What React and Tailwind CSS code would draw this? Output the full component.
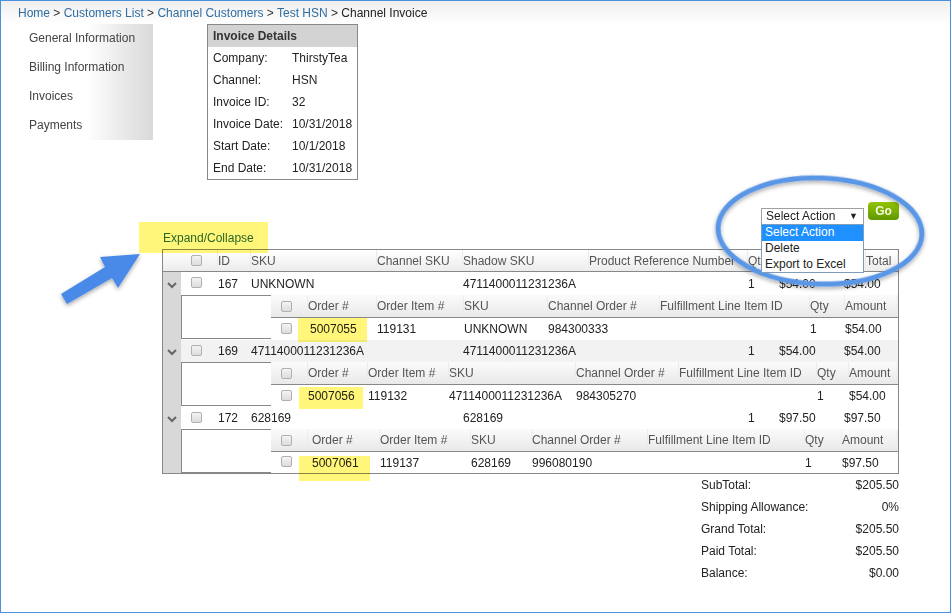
const Check = () => (
  <span className="block w-[11px] h-[11px] rounded-[2px] border border-[#b0b0b0] bg-gradient-to-b from-[#f4f4f4] to-[#dcdcdc]" />
);

const Chevron = () => (
  <svg width="10" height="7" viewBox="0 0 10 7" className="mt-[3px]">
    <polyline points="1,1 5,5 9,1" fill="none" stroke="#666" strokeWidth="2" />
  </svg>
);

const Cell = ({ w, head, children }) => (
  <div
    className={`${w} h-full flex items-center whitespace-nowrap shrink-0 ${
      head ? "text-[#555] border-r border-[#ececec]" : "text-[#222]"
    }`}
  >
    {children}
  </div>
);

const mainHead = [
  ["w-[33px]", "ID"],
  ["w-[126px]", "SKU"],
  ["w-[86px]", "Channel SKU"],
  ["w-[126px]", "Shadow SKU"],
  ["w-[159px]", "Product Reference Number"],
  ["w-[32px]", "Qty"],
  ["w-[86px]", ""],
  ["w-[32px]", "Total"],
];

const mainWidths = ["w-[33px]", "w-[126px]", "w-[86px]", "w-[126px]", "w-[159px]", "w-[31px]", "w-[65px]", "w-[54px]"];

const cols = ["Order #", "Order Item #", "SKU", "Channel Order #", "Fulfillment Line Item ID", "Qty", "Amount"];

const groups = [
  {
    gray: false,
    rowH: "h-[23px]",
    detailH: "h-[45px]",
    row: ["167", "UNKNOWN", "", "4711400011231236A", "", "1", "$54.00", "$54.00"],
    colWidths: ["w-[69px]", "w-[87px]", "w-[84px]", "w-[112px]", "w-[150px]", "w-[35px]", "w-[53px]"],
    headPad: "",
    dataPad: "pl-[2px]",
    data: ["5007055", "119131", "UNKNOWN", "984300333", "", "1", "$54.00"],
  },
  {
    gray: true,
    rowH: "h-[22px]",
    detailH: "h-[45px]",
    row: ["169", "4711400011231236A", "", "4711400011231236A", "", "1", "$54.00", "$54.00"],
    colWidths: ["w-[60px]", "w-[81px]", "w-[127px]", "w-[103px]", "w-[138px]", "w-[32px]", "w-[49px]"],
    headPad: "",
    dataPad: "",
    data: ["5007056", "119132", "4711400011231236A", "984305270", "", "1", "$54.00"],
  },
  {
    gray: false,
    rowH: "h-[22px]",
    detailH: "h-[44px]",
    row: ["172", "628169", "", "628169", "", "1", "$97.50", "$97.50"],
    colWidths: ["w-[72px]", "w-[91px]", "w-[61px]", "w-[116px]", "w-[157px]", "w-[37px]", "w-[56px]"],
    headPad: "pl-[4px]",
    dataPad: "pl-[4px]",
    data: ["5007061", "119137", "628169", "996080190", "", "1", "$97.50"],
  },
];

const Group = ({ g }) => (
  <div>
    <div className={`${g.rowH} flex ${g.gray ? "bg-[#f2f2f2]" : "bg-white"}`}>
      <div className="w-[18px] shrink-0 bg-[#d8d8d8] flex items-center justify-center">
        <Chevron />
      </div>
      <div className="w-[37px] shrink-0 flex items-center pl-[10px] pb-[2px]">
        <Check />
      </div>
      {g.row.map((t, i) => (
        <Cell key={i} w={mainWidths[i]}>{t}</Cell>
      ))}
    </div>
    <div className={`${g.detailH} flex`}>
      <div className="w-[18px] shrink-0 bg-[#d8d8d8]" />
      <div className="w-[90px] h-[44px] shrink-0 bg-white border-l border-t border-b border-[#888]" />
      <div className="flex-1 flex flex-col bg-white">
        <div className="h-[23px] shrink-0 flex border-b border-[#888] bg-gradient-to-b from-[#fbfbfb] to-[#e9e9e9]">
          <div className="w-[37px] shrink-0 flex items-center pl-[10px] border-r border-[#ececec]">
            <Check />
          </div>
          {cols.map((t, i) => (
            <Cell key={i} w={g.colWidths[i]} head>
              <span className={i === 0 ? g.headPad : ""}>{t}</span>
            </Cell>
          ))}
        </div>
        <div className="flex-1 flex">
          <div className="w-[37px] shrink-0 flex items-center pl-[10px] pb-[2px]">
            <Check />
          </div>
          {g.data.map((t, i) => (
            <Cell key={i} w={g.colWidths[i]}>
              <span className={i === 0 ? g.dataPad : ""}>{t}</span>
            </Cell>
          ))}
        </div>
      </div>
    </div>
  </div>
);

const details = [
  ["Company:", "ThirstyTea"],
  ["Channel:", "HSN"],
  ["Invoice ID:", "32"],
  ["Invoice Date:", "10/31/2018"],
  ["Start Date:", "10/1/2018"],
  ["End Date:", "10/31/2018"],
];

const totals = [
  ["SubTotal:", "$205.50"],
  ["Shipping Allowance:", "0%"],
  ["Grand Total:", "$205.50"],
  ["Paid Total:", "$205.50"],
  ["Balance:", "$0.00"],
];

export default function App() {
  return (
    <div className="relative w-[951px] h-[613px] overflow-hidden bg-white text-[12px] text-[#222] font-['Liberation_Sans',Arial,sans-serif]">
      <div className="h-[24px] pl-[18px] pt-[5px] leading-[16px] bg-gradient-to-b from-[#eeeeee] to-white text-[#333]">
        <span className="text-[#2f6da3]">Home</span> &gt; <span className="text-[#2f6da3]">Customers List</span> &gt;{" "}
        <span className="text-[#2f6da3]">Channel Customers</span> &gt; <span className="text-[#2f6da3]">Test HSN</span> &gt;{" "}
        <span className="text-[#222]">Channel Invoice</span>
      </div>

      <div className="flex items-start h-[156px]">
        <div className="ml-[18px] w-[135px] h-[116px] pl-[11px] bg-gradient-to-r from-white from-50% to-[#d9d9d9] text-[#444]">
          {["General Information", "Billing Information", "Invoices", "Payments"].map((t) => (
            <div key={t} className="h-[29px] pb-[2px] flex items-center">{t}</div>
          ))}
        </div>
        <div className="ml-[54px] w-[151px] h-[156px] border border-[#888]">
          <div className="h-[22px] bg-[#d3d3d3] pl-[5px] font-bold flex items-center text-[#333]">Invoice Details</div>
          {details.map(([a, b]) => (
            <div key={a} className="h-[22px] flex items-center pl-[5px]">
              <span className="w-[79px]">{a}</span>
              <span>{b}</span>
            </div>
          ))}
        </div>
      </div>

      <div className="h-[22px]" />
      <div className="relative h-[18px] flex justify-end pr-[52px] gap-[4px]">
        <div className="relative w-[103px] h-[17px] mt-[6px] border border-[#a0a0a0] pl-[4px] pb-[2px] flex items-center justify-between pr-[5px]">
          <span>Select Action</span>
          <span className="text-[9px] leading-none mt-[2px]">▼</span>
          <div className="absolute z-10 left-[-1px] top-[15px] w-[103px] h-[49px] bg-white border border-[#7f9db9]">
            <div className="h-[16px] pl-[3px] pb-[2px] flex items-center bg-[#1e90ff] text-white">Select Action</div>
            <div className="h-[16px] pl-[3px] pb-[2px] flex items-center">Delete</div>
            <div className="h-[16px] pl-[3px] pb-[2px] flex items-center">Export to Excel</div>
          </div>
        </div>
        <div className="w-[31px] h-[18px] rounded-[4px] bg-gradient-to-b from-[#93c406] to-[#5f9800] text-[#f4f8dc] font-bold text-[12px] flex items-center justify-center">
          Go
        </div>
      </div>
      <div className="h-[29px] pl-[163px] pt-[10px] leading-[16px] text-[#2b6a4f]">Expand/Collapse</div>

      <div className="ml-[162px] w-[737px] border border-[#888]">
        <div className="h-[22px] flex border-b border-[#888] bg-gradient-to-b from-white to-[#ececec]">
          <div className="w-[18px] shrink-0" />
          <div className="w-[37px] shrink-0 flex items-center pl-[10px] border-r border-[#ececec]">
            <Check />
          </div>
          {mainHead.map(([w, t], i) => (
            <Cell key={i} w={w} head>{t}</Cell>
          ))}
        </div>
        {groups.map((g) => (
          <Group key={g.row[0]} g={g} />
        ))}
      </div>

      <div className="ml-[701px] w-[198px]">
        {totals.map(([a, b]) => (
          <div key={a} className="h-[22px] flex items-center justify-between">
            <span>{a}</span>
            <span>{b}</span>
          </div>
        ))}
      </div>

      <div className="absolute left-[139px] top-[222px] w-[129px] h-[31px] bg-[#fff67a] mix-blend-multiply" />
      <div className="absolute left-[298px] top-[318px] w-[69px] h-[24px] bg-[#fff67a] mix-blend-multiply" />
      <div className="absolute left-[299px] top-[387px] w-[64px] h-[22px] bg-[#fff67a] mix-blend-multiply" />
      <div className="absolute left-[299px] top-[456px] w-[71px] h-[25px] bg-[#fff67a] mix-blend-multiply" />

      <svg className="absolute left-0 top-0 pointer-events-none" width="951" height="613" viewBox="0 0 951 613">
        <defs>
          <filter id="sh" x="-20%" y="-20%" width="140%" height="140%">
            <feDropShadow dx="0" dy="2" stdDeviation="2" floodColor="#000" floodOpacity="0.35" />
          </filter>
        </defs>
        <polygon points="140,254 100,257 105,267 61,294 67,304 112,278 118,288" fill="#4a8ae8" filter="url(#sh)" />
        <ellipse cx="820" cy="231" rx="102" ry="53" fill="none" stroke="#5a96e6" strokeWidth="5" filter="url(#sh)" transform="rotate(2 820 231)" />
      </svg>

      <div className="absolute inset-0 border border-[#4a8fe0] pointer-events-none" />
    </div>
  );
}
